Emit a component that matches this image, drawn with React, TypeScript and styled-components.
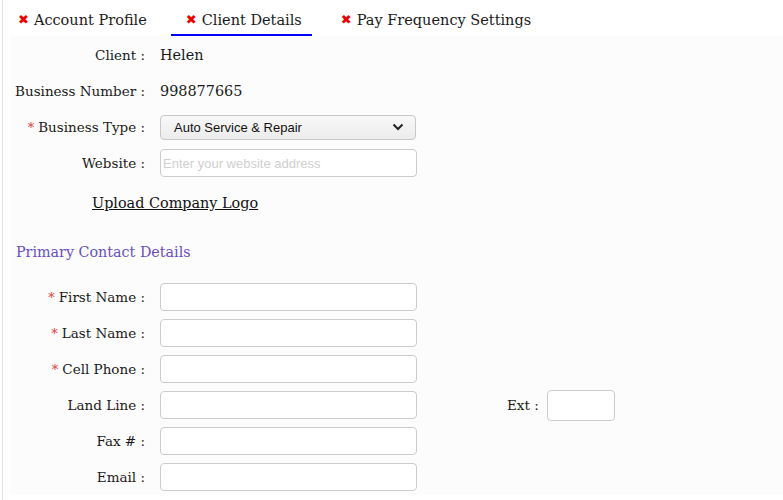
import React from "react";
import styled, { createGlobalStyle } from "styled-components";

const Global = createGlobalStyle`
  html, body { margin: 0; padding: 0; background: #ffffff; }
  body { font-family: "DejaVu Serif", serif; color: #1e1e1e; }
  * { box-sizing: border-box; }
`;

const Page = styled.div`
  margin-left: 2px;
  border-left: 1px solid #e2e2e2;
  min-height: 500px;
  background: #ffffff;
`;

const TabBar = styled.div`
  display: flex;
  height: 36px;
  padding-left: 0;
  gap: 14px;
`;

const Tab = styled.div<{ $active?: boolean }>`
  display: flex;
  align-items: center;
  gap: 5px;
  padding: 5px 10px 0 15px;
  font-size: 14.5px;
  color: #1a1a1a;
  border-bottom: 2px solid ${(p) => (p.$active ? "#0000ff" : "transparent")};
`;

const XMark = styled.span`
  color: #ee0000;
  font-family: "DejaVu Sans", sans-serif;
  font-size: 13px;
  font-weight: bold;
`;

const Body = styled.div`
  margin-left: 7px;
  background: #fcfcfc;
  padding-top: 1px;
`;

const Row = styled.div`
  display: grid;
  grid-template-columns: 135px 257px auto;
  column-gap: 15px;
  align-items: center;
  height: 36px;
`;

const Label = styled.div`
  text-align: right;
  font-size: 13.5px;
  color: #1a1a1a;
  white-space: nowrap;
`;

const Req = styled.span`
  color: #e53935;
  font-size: 13px;
  margin-right: 4px;
`;

const Value = styled.div`
  font-size: 14.4px;
  color: #1a1a1a;
`;

const TextInput = styled.input<{ $w?: number; $h?: number }>`
  width: ${(p) => p.$w ?? 257}px;
  height: ${(p) => p.$h ?? 28}px;
  border: 1px solid #cccccc;
  border-radius: 4px;
  background: #ffffff;
  font-family: "Liberation Sans", Arial, sans-serif;
  font-size: 13px;
  padding: 0 2px;
  &::placeholder { color: #cfcfcf; }
`;

const SelectBox = styled.div`
  width: 256px;
  height: 25px;
  border: 1px solid #c8c8c8;
  border-radius: 4px;
  background: linear-gradient(#f8f8f8, #ececec);
  display: flex;
  align-items: center;
  justify-content: space-between;
  padding: 0 11px 0 13px;
  font-family: "Liberation Sans", Arial, sans-serif;
  font-size: 13px;
  color: #111;
`;

const ExtWrap = styled.div`
  display: flex;
  align-items: center;
  gap: 8px;
  margin-left: 75px;
`;

const UploadRow = styled.div`
  height: 44px;
  display: flex;
  align-items: center;
  padding-left: 82px;
`;

const UploadLink = styled.a`
  font-size: 14.4px;
  color: #111;
  text-decoration: underline;
  cursor: pointer;
`;

const Heading = styled.div`
  height: 54px;
  padding: 19px 0 0 6px;
  font-size: 14.3px;
  color: #6a4fbf;
`;

const Chevron = () => (
  <svg width="12" height="8" viewBox="0 0 12 8">
    <path d="M1.5 1.5 L6 6 L10.5 1.5" fill="none" stroke="#222" strokeWidth="2" />
  </svg>
);

const Field = ({ label, req, children }: { label: string; req?: boolean; children: React.ReactNode }) => (
  <Row>
    <Label>
      {req && <Req>*</Req>}
      {label} :
    </Label>
    {children}
  </Row>
);

export default function App() {
  return (
    <>
      <Global />
      <Page>
        <TabBar>
          <Tab><XMark>✖</XMark>Account Profile</Tab>
          <Tab $active><XMark>✖</XMark>Client Details</Tab>
          <Tab><XMark>✖</XMark>Pay Frequency Settings</Tab>
        </TabBar>
        <Body>
          <Field label="Client"><Value>Helen</Value></Field>
          <Field label="Business Number"><Value>998877665</Value></Field>
          <Field label="Business Type" req>
            <SelectBox>
              <span>Auto Service &amp; Repair</span>
              <Chevron />
            </SelectBox>
          </Field>
          <Field label="Website">
            <TextInput placeholder="Enter your website address" />
          </Field>
          <UploadRow><UploadLink>Upload Company Logo</UploadLink></UploadRow>
          <Heading>Primary Contact Details</Heading>
          <Field label="First Name" req><TextInput /></Field>
          <Field label="Last Name" req><TextInput /></Field>
          <Field label="Cell Phone" req><TextInput /></Field>
          <Row>
            <Label>Land Line :</Label>
            <TextInput />
            <ExtWrap>
              <Label>Ext :</Label>
              <TextInput $w={68} $h={31} />
            </ExtWrap>
          </Row>
          <Field label="Fax #"><TextInput /></Field>
          <Field label="Email"><TextInput /></Field>
        </Body>
      </Page>
    </>
  );
}
